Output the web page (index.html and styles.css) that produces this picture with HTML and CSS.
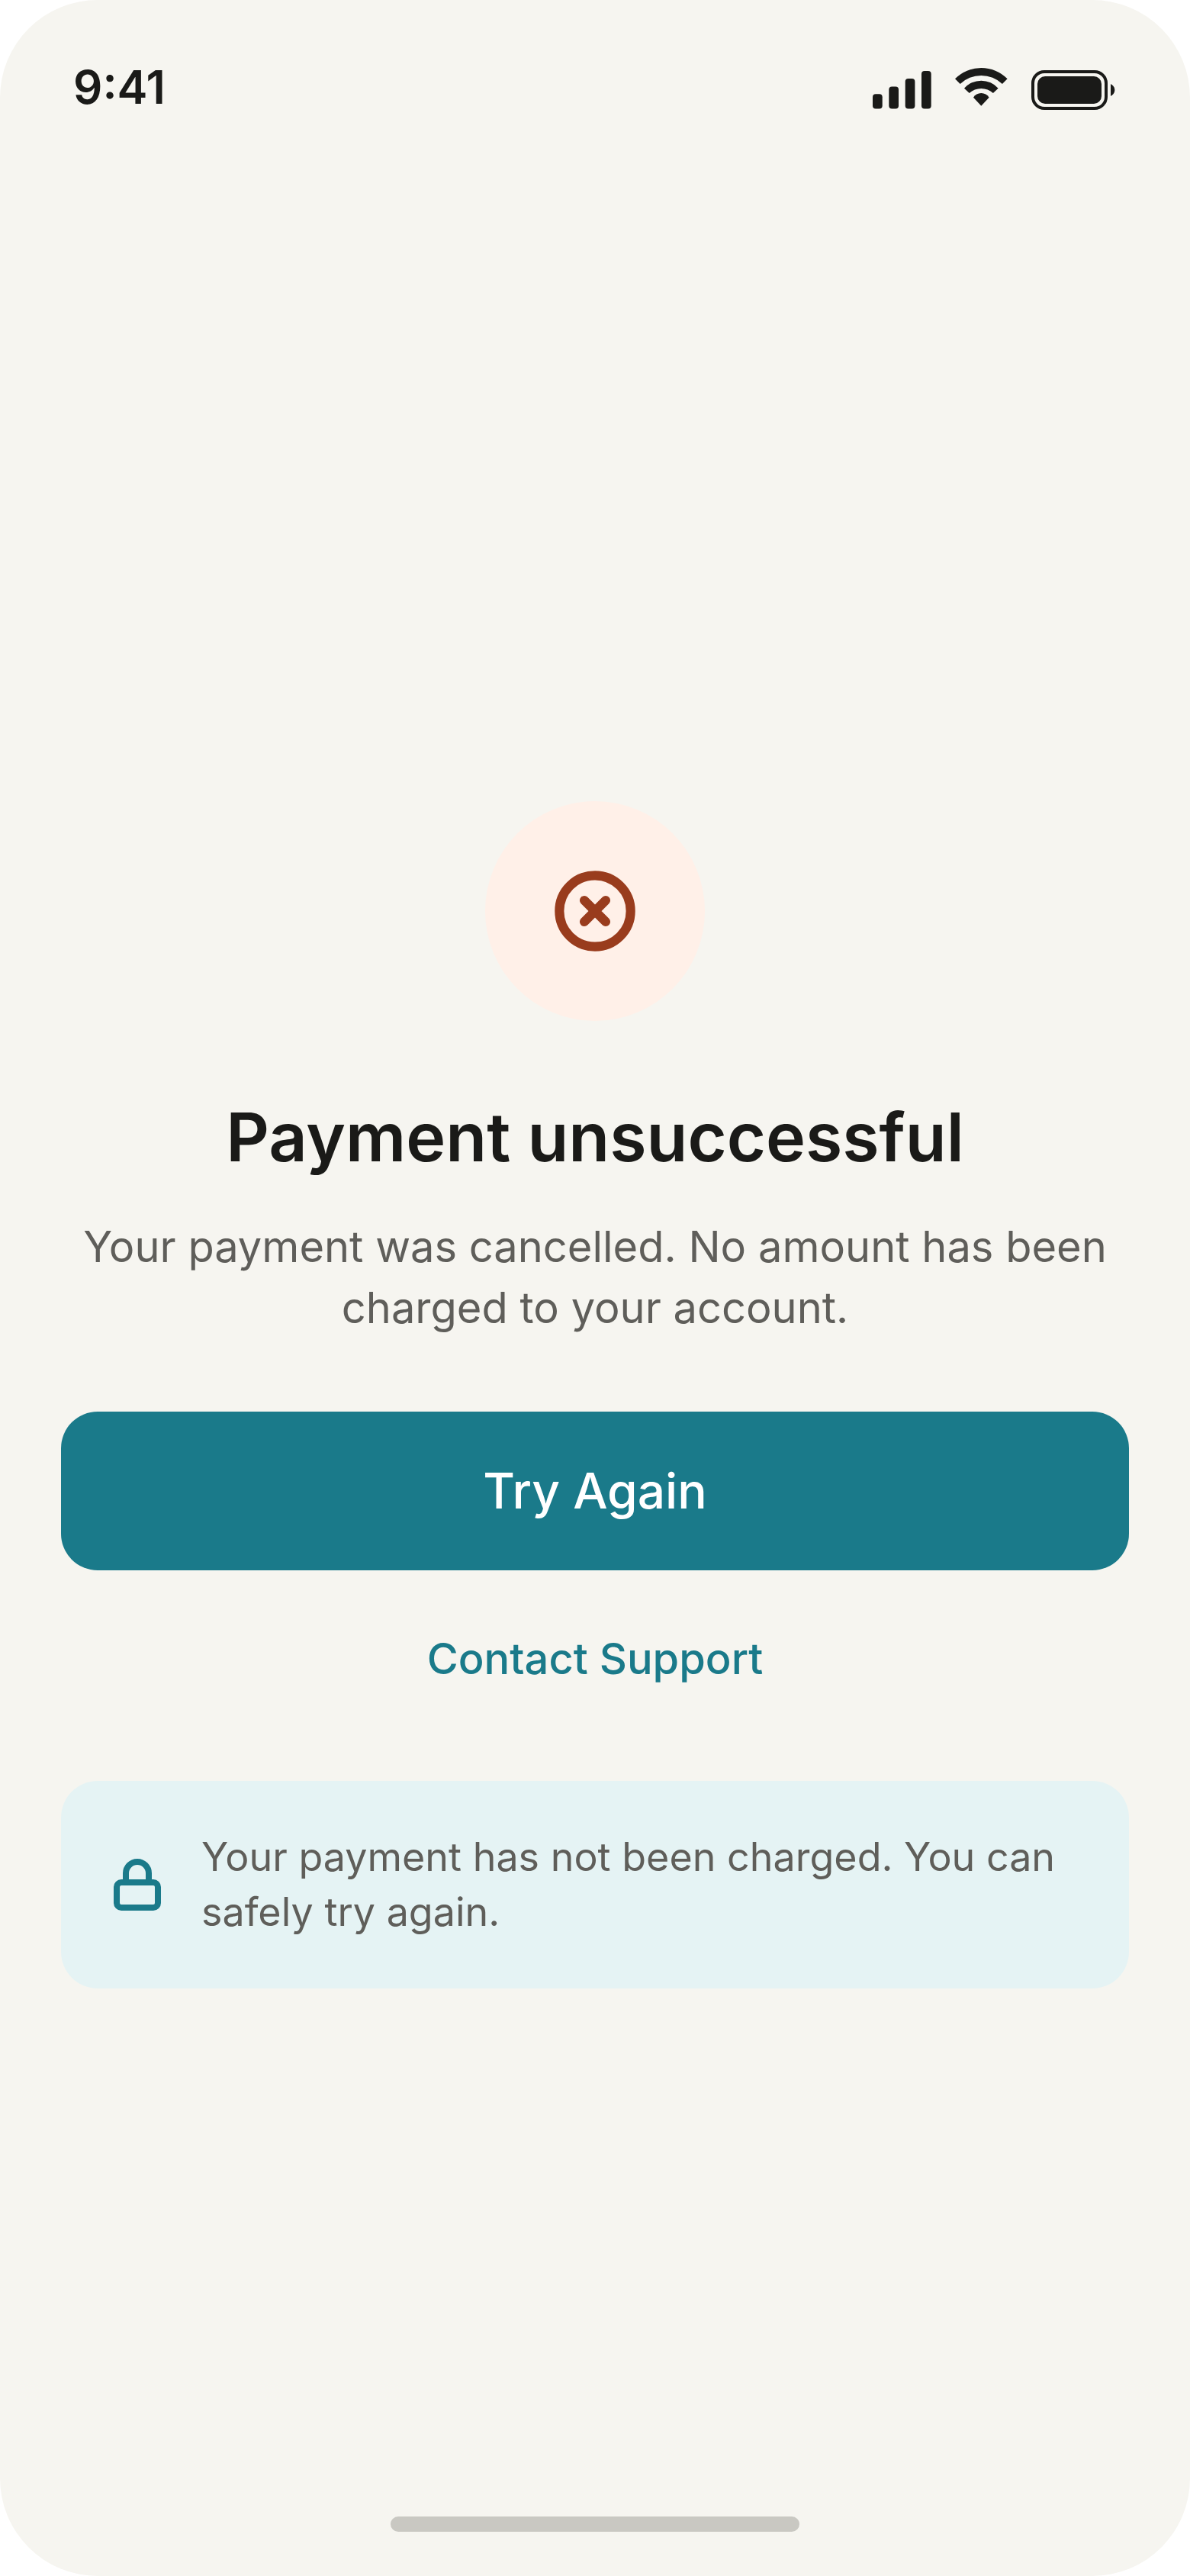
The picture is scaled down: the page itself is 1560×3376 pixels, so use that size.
FILE: index.html
```html
<!DOCTYPE html>
<html lang="en">
<head>
  <meta charset="UTF-8" />
  <meta name="viewport" content="width=device-width, initial-scale=1.0" />
  <title>Payment unsuccessful</title>
  <link rel="stylesheet" href="styles.css">
</head>
<body>
  <div class="screen">
    <header class="status-bar">
      <span class="time">9:41</span>
      <div class="status-icons">
        <svg width="76" height="60" viewBox="0 0 76 60" fill="currentColor" aria-hidden="true">
          <rect x="0" y="39.3" width="12.7" height="19.2" rx="4" />
          <rect x="21.3" y="29.5" width="12.7" height="29" rx="4" />
          <rect x="42.7" y="19" width="12.7" height="39.5" rx="4" />
          <rect x="64" y="9" width="12.7" height="49.5" rx="4" />
        </svg>
        <svg width="68" height="60" viewBox="0 0 68 60" fill="currentColor" aria-hidden="true">
          <path d="M0 19.3A48.3 48.3 0 0 1 68.6 19.3L61.9 26A40 40 0 0 0 6.7 26Z" />
          <path d="M12 31.7A29.9 29.9 0 0 1 56.6 31.7L49.9 38A23.3 23.3 0 0 0 18.7 38Z" />
          <path d="M24 43.7A12.2 12.2 0 0 1 44.6 43.7L34.3 54.7Z" />
        </svg>
        <svg width="112" height="60" viewBox="0 0 112 60" fill="currentColor" aria-hidden="true">
          <rect x="2" y="10" width="96" height="48" rx="15" fill="none" stroke="currentColor" stroke-width="4" />
          <rect x="8" y="16" width="84" height="36" rx="10" />
          <path d="M104 26C107 27.5 109.3 30.5 109.3 34C109.3 37.5 107 40.5 104 42Z" />
        </svg>
      </div>
    </header>

    <main class="content">
      <div class="status-badge">
        <svg width="112" height="112" viewBox="0 0 24 24" fill="none" stroke="currentColor" stroke-width="2.6" stroke-linecap="round" aria-hidden="true">
          <circle cx="12" cy="12" r="10" />
          <path d="M15 9l-6 6M9 9l6 6" />
        </svg>
      </div>

      <h1>Payment unsuccessful</h1>
      <p class="message">Your payment was cancelled. No amount has been charged to your account.</p>

      <button class="btn-primary" type="button">Try Again</button>
      <a class="support-link" href="#support">Contact Support</a>

      <div class="notice">
        <svg width="72" height="72" viewBox="0 0 24 24" fill="none" stroke="currentColor" stroke-width="2.67" aria-hidden="true">
          <rect x="3" y="11" width="18" height="11" rx="2" />
          <path d="M7 11V7a5 5 0 0 1 10 0v4" />
        </svg>
        <p>Your payment has not been charged. You can safely try again.</p>
      </div>
    </main>

    <div class="home-indicator"></div>
  </div>
</body>
</html>
```
FILE: styles.css
```css
* {
  box-sizing: border-box;
}

body {
  margin: 0;
  font-family: 'Inter', sans-serif;
  background: #ffffff;
  color: #1a1a18;
}

h1, p {
  margin: 0;
}

.screen {
  min-height: 100vh;
  display: flex;
  flex-direction: column;
  background: #f6f5f0;
  border-radius: 128px;
}

/* status bar */
.status-bar {
  display: flex;
  justify-content: space-between;
  align-items: center;
  padding: 76px 96px 0;
}

.time {
  font-size: 60px;
  font-weight: 600;
  line-height: 76px;
}

.status-icons {
  display: flex;
  gap: 32px;
}

.status-icons svg {
  display: block;
  overflow: visible;
}

/* main */
.content {
  flex: 1;
  display: flex;
  flex-direction: column;
  justify-content: center;
  align-items: center;
  padding: 206px 80px 0;
  text-align: center;
}

.status-badge {
  width: 288px;
  height: 288px;
  display: flex;
  align-items: center;
  justify-content: center;
  border-radius: 50%;
  background: #fff0e8;
  color: #993c1d;
}

h1 {
  margin-top: 96px;
  font-size: 88px;
  font-weight: 600;
  line-height: 112px;
}

.message {
  margin-top: 48px;
  font-size: 56px;
  line-height: 80px;
  color: #5f5e5a;
}

.btn-primary {
  width: 100%;
  margin-top: 96px;
  padding: 64px;
  border: none;
  border-radius: 48px;
  background: #1a7a8a;
  color: #ffffff;
  font-family: inherit;
  font-size: 64px;
  font-weight: 500;
  line-height: 80px;
  cursor: pointer;
}

.support-link {
  margin-top: 48px;
  padding: 28px;
  font-size: 56px;
  font-weight: 500;
  line-height: 80px;
  color: #1a7a8a;
  text-decoration: none;
}

.notice {
  width: 100%;
  display: flex;
  align-items: center;
  gap: 48px;
  margin-top: 92px;
  padding: 64px;
  border-radius: 48px;
  background: #e5f3f4;
  color: #1a7a8a;
  text-align: left;
}

.notice svg {
  flex-shrink: 0;
}

.notice p {
  font-size: 52px;
  line-height: 72px;
  color: #5f5e5a;
}

.home-indicator {
  width: 536px;
  max-width: 60%;
  height: 20px;
  margin: 0 auto 58px;
  border-radius: 10px;
  background: #c9c8c2;
}
```
